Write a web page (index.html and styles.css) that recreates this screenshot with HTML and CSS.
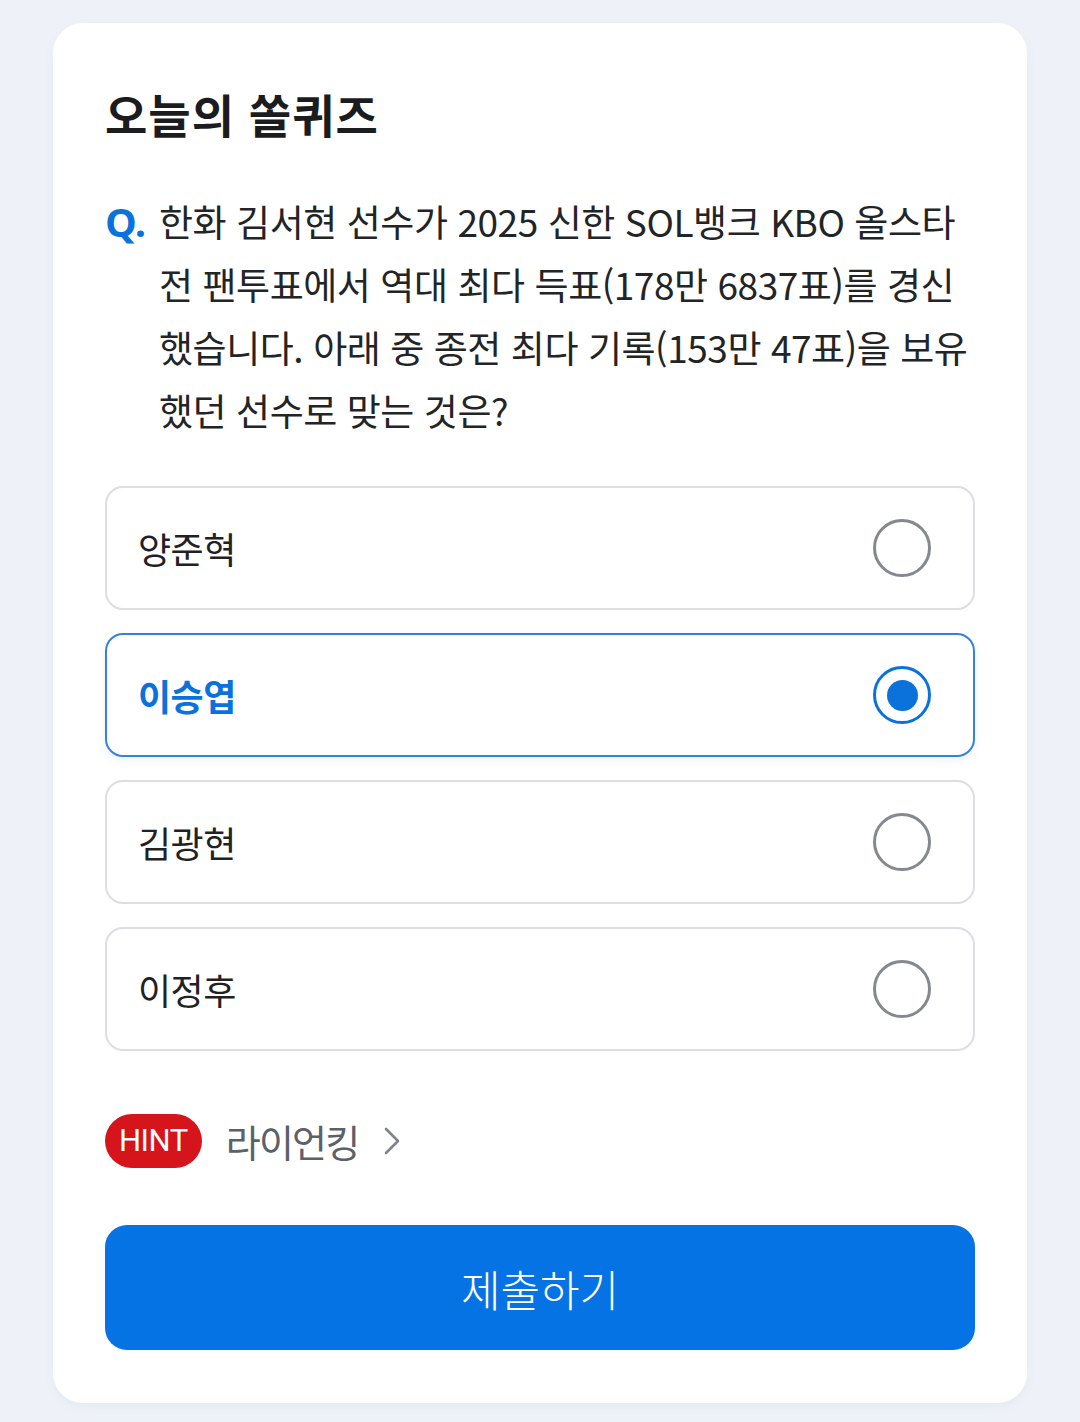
FILE: index.html
```html
<!DOCTYPE html>
<html lang="ko">

<head>
    <meta charset="UTF-8">
    <meta name="viewport" content="width=device-width, initial-scale=1.0">
    <title>오늘의 쏠퀴즈</title>
    <link rel="stylesheet" href="styles.css">
</head>

<body>
    <div class="card">
        <h1 class="title">오늘의 쏠퀴즈</h1>

        <div class="question">
            <span class="q-mark">Q.</span>
            <p class="q-text">한화 김서현 선수가 2025 신한 SOL뱅크 KBO 올스타전 팬투표에서 역대 최다 득표(178만 6837표)를 경신했습니다. 아래 중 종전 최다 기록(153만 47표)을 보유했던 선수로 맞는 것은?</p>
        </div>

        <ul class="options">
            <li class="option">
                <span class="option-label">양준혁</span>
                <span class="radio"></span>
            </li>
            <li class="option selected">
                <span class="option-label">이승엽</span>
                <span class="radio"></span>
            </li>
            <li class="option">
                <span class="option-label">김광현</span>
                <span class="radio"></span>
            </li>
            <li class="option">
                <span class="option-label">이정후</span>
                <span class="radio"></span>
            </li>
        </ul>

        <a class="hint" href="#">
            <span class="hint-badge">HINT</span>
            <span class="hint-text">라이언킹</span>
            <svg class="hint-arrow" width="18" height="30" viewBox="0 0 18 30">
                <path d="M3 3 L15 15 L3 27" fill="none" stroke="#7d848c" stroke-width="2.6" stroke-linecap="round" stroke-linejoin="round"/>
            </svg>
        </a>

        <button class="submit" type="button">제출하기</button>
    </div>
</body>

</html>
```

FILE: styles.css
```css
body {
    font-family: 'Noto Sans CJK KR', 'Noto Sans', sans-serif;
    background-color: #eef2f8;
    margin: 0;
    padding: 23px 53px 20px;
}

.card {
    background: white;
    border-radius: 30px;
    padding: 60px 52px 53px;
    box-shadow: 0 4px 12px rgba(30, 50, 90, 0.04);
}

.title {
    margin: 0;
    font-size: 46px;
    line-height: 60px;
    font-weight: bold;
    color: #1b1c1e;
    letter-spacing: 1px;
}

.question {
    display: flex;
    margin-top: 47px;
}

.q-mark {
    flex: 0 0 54px;
    font-family: 'Open Sans', sans-serif;
    font-size: 40px;
    line-height: 63px;
    font-weight: bold;
    color: #0b72dc;
    letter-spacing: -2px;
}

.q-text {
    margin: 0;
    font-size: 37px;
    line-height: 63px;
    color: #222426;
    letter-spacing: -0.45px;
}

.options {
    list-style: none;
    margin: 44px 0 0;
    padding: 0;
    display: flex;
    flex-direction: column;
    gap: 23px;
}

.option {
    display: flex;
    align-items: center;
    justify-content: space-between;
    height: 124px;
    box-sizing: border-box;
    padding: 0 42px 0 31px;
    border: 2px solid #dcdee1;
    border-radius: 18px;
}

.option-label {
    font-size: 36px;
    color: #1f2123;
    letter-spacing: -0.5px;
}

.radio {
    width: 58px;
    height: 58px;
    box-sizing: border-box;
    border: 3px solid #85898e;
    border-radius: 50%;
    display: flex;
    align-items: center;
    justify-content: center;
}

.option.selected {
    border-color: #3583d9;
    box-shadow: 0 3px 8px rgba(30, 90, 180, 0.08);
}

.option.selected .option-label {
    color: #0b72dc;
    font-weight: bold;
}

.option.selected .radio {
    border-color: #0b72dc;
}

.option.selected .radio::after {
    content: '';
    width: 31px;
    height: 31px;
    border-radius: 50%;
    background: #0b72dc;
}

.hint {
    display: flex;
    align-items: center;
    margin-top: 62px;
    text-decoration: none;
}

.hint-badge {
    background: #d5141b;
    color: white;
    font-family: 'Roboto', sans-serif;
    font-size: 31px;
    line-height: 54px;
    height: 54px;
    padding: 0 14px;
    border-radius: 27px;
    letter-spacing: -0.5px;
}

.hint-text {
    margin-left: 24px;
    font-size: 38px;
    color: #5b6168;
    letter-spacing: -1.8px;
}

.hint-arrow {
    margin-left: 25px;
}

.submit {
    display: block;
    width: 100%;
    height: 125px;
    margin-top: 57px;
    border: none;
    border-radius: 22px;
    background-color: #0673e5;
    color: white;
    font-family: 'Noto Sans CJK KR', sans-serif;
    font-size: 43px;
    font-weight: 300;
    cursor: pointer;
}
```
